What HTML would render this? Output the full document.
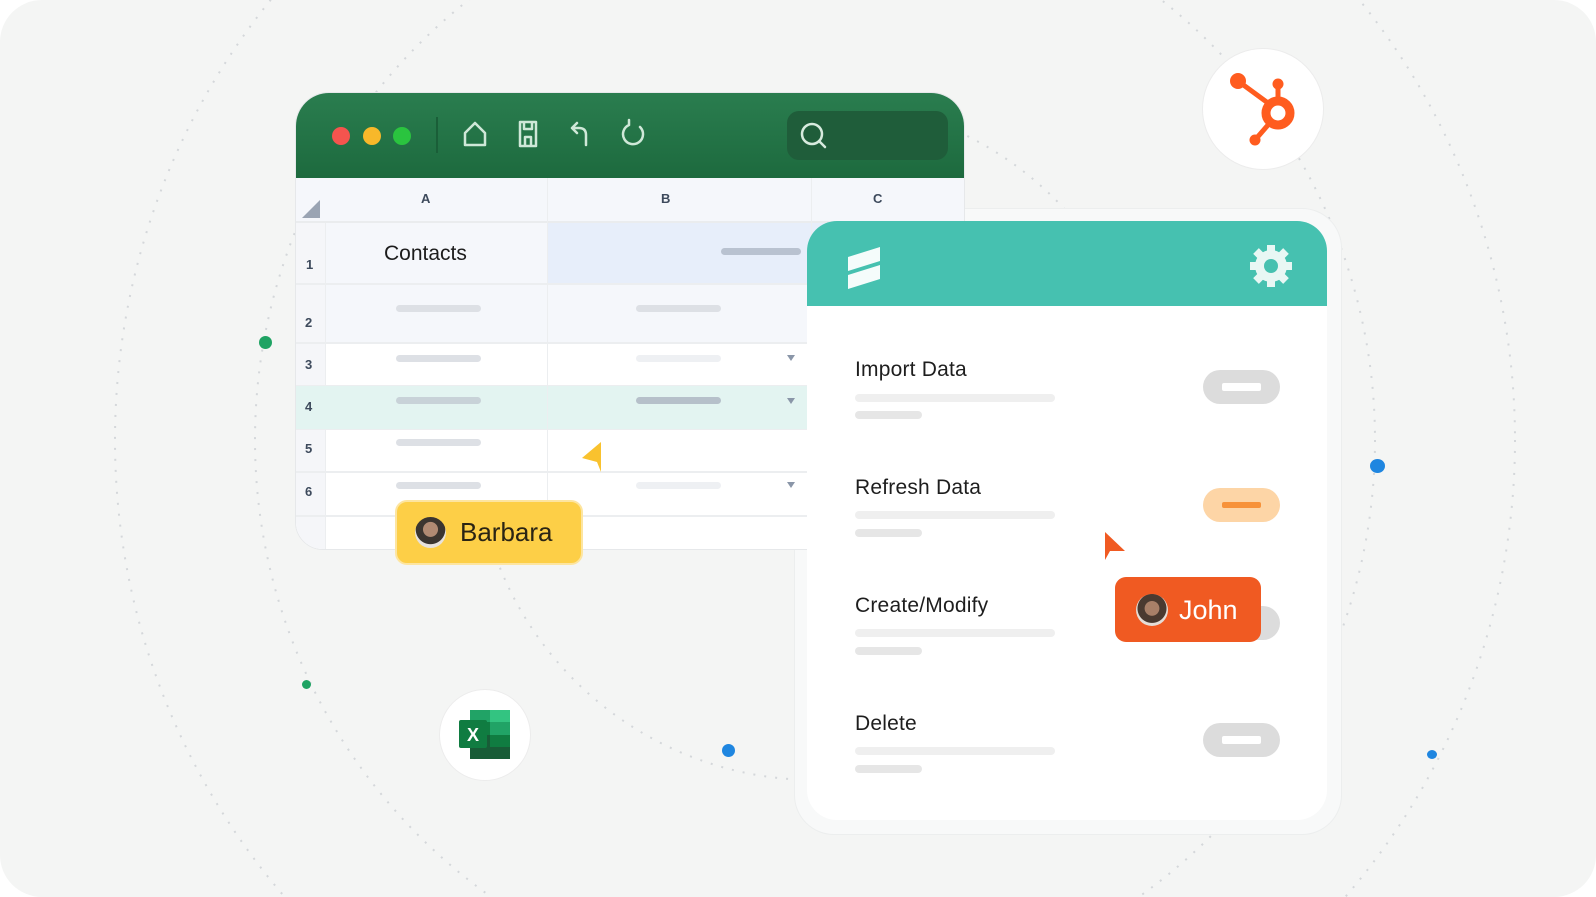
<!DOCTYPE html>
<html style="overflow:hidden;width:1596px;height:897px"><head><meta charset="utf-8"><style>
*{margin:0;padding:0;box-sizing:border-box}
body{width:1596px;height:897px;background:#fff;position:relative;overflow:hidden;font-family:"Liberation Sans",sans-serif}
.card{position:absolute;left:0;top:0;width:1596px;height:897px;background:#f4f5f4;border-radius:42px}
.abs{position:absolute}
.win{left:295px;top:92px;width:670px;height:458px;background:#fff;border-radius:34px 34px 0 28px;overflow:hidden;border:1px solid #e6e8ea}
.tb{left:0;top:0;width:670px;height:85px;background:linear-gradient(#2a7d4f,#1d6a3e)}
.bar{height:7px;border-radius:4px;background:#dde0e5}
.rn{font-size:13px;color:#3d4a5c;font-weight:bold}
.panel{left:807px;top:221px;width:520px;height:599px;background:#fff;border-radius:30px;overflow:hidden}
.ph{left:0;top:0;width:520px;height:85px;background:#46c1b0}
.lbl{font-size:21px;color:#1e1e1e;letter-spacing:0.2px}
.tg{width:77px;height:34px;border-radius:17px;background:#dcdcdc}
.tg i{position:absolute;left:19px;top:13px;width:39px;height:8px;background:#fff;border-radius:2px}
.lb{height:8px;background:#efefef;border-radius:4px}
.dot{position:absolute;border-radius:50%}
</style></head><body>
<div class="card"></div>
<svg class="abs" style="left:0;top:0" width="1596" height="897">
<g fill="none" stroke="#d4d7da" stroke-width="2" stroke-dasharray="2 9">
<circle cx="815" cy="440" r="340"/>
<circle cx="815" cy="440" r="560"/>
<circle cx="815" cy="440" r="700"/>
</g></svg>
<div class="abs" style="left:794px;top:208px;width:548px;height:627px;border-radius:40px;background:#f8f9f9;border:1px solid #eceeee"></div>

<div class="abs win">
 <div class="abs tb">
  <div class="dot" style="left:36px;top:34px;width:18px;height:18px;background:#f5544e"></div>
  <div class="dot" style="left:67px;top:34px;width:18px;height:18px;background:#f8b82a"></div>
  <div class="dot" style="left:97px;top:34px;width:18px;height:18px;background:#2ac43f"></div>
  <div class="abs" style="left:140px;top:24px;width:2px;height:36px;background:#1a5e38"></div>
  <svg class="abs" style="left:0;top:0" width="670" height="85" fill="none" stroke="#cfe8d8" stroke-width="2.5" stroke-linejoin="round" stroke-linecap="round">
   <path d="M169 52 V40 L179 30 L189 40 V52 Z"/>
   <path d="M224 29 H240 V53 H224 Z M228 29 V36 H236 V29 M229 44 H235 V53 H229 Z"/>
   <path d="M276 35 H283 Q290 35 290 42 V52 M276 35 L281 30 M276 35 L281 40"/>
   <path d="M333 32 A10 10 0 1 0 344 34 M333 32 V27"/>
  </svg>
  <div class="abs" style="left:491px;top:18px;width:161px;height:49px;border-radius:12px;background:#1f5d3a"></div>
  <svg class="abs" style="left:491px;top:18px" width="60" height="49" fill="none" stroke="#d7ebde" stroke-width="2.5" stroke-linecap="round"><circle cx="25" cy="23" r="10"/><path d="M32 30 L38 36"/></svg>
 </div>
 <div class="abs" style="left:0;top:85px;width:670px;height:373px;background:#fff"></div>
 <div class="abs" style="left:0;top:85px;width:30px;height:373px;background:#f5f6f9;border-right:1px solid #eceef0"></div>
 <div class="abs" style="left:0;top:85px;width:670px;height:45px;background:#f5f7fb;border-bottom:2px solid #eaecee"></div>
 <svg class="abs" style="left:4px;top:105px" width="22" height="22"><path d="M20 2 V20 H2 Z" fill="#9aa4b3"/></svg>
 <div class="abs rn" style="left:125px;top:98px">A</div>
 <div class="abs rn" style="left:365px;top:98px">B</div>
 <div class="abs rn" style="left:577px;top:98px">C</div>
 <div class="abs" style="left:30px;top:130px;width:640px;height:119px;background:#f5f7fb"></div>
 <div class="abs" style="left:251px;top:130px;width:420px;height:60px;background:#e7eefa"></div>
 <div class="abs" style="left:30px;top:292px;width:640px;height:44px;background:#e3f4f1"></div>
 <div class="abs" style="left:0;top:292px;width:30px;height:44px;background:#e3f4f1"></div>
 <div class="abs" style="left:251px;top:85px;width:1px;height:373px;background:#eceef0"></div>
 <div class="abs" style="left:515px;top:85px;width:1px;height:130px;background:#eceef0"></div>
 <div class="abs" style="left:0;top:190px;width:670px;height:2px;background:#eceef0"></div>
 <div class="abs" style="left:0;top:249px;width:670px;height:2px;background:#eceef0"></div>
 <div class="abs" style="left:0;top:292px;width:670px;height:1px;background:#eceef0"></div>
 <div class="abs" style="left:0;top:336px;width:670px;height:1px;background:#eceef0"></div>
 <div class="abs" style="left:0;top:378px;width:670px;height:2px;background:#eceef0"></div>
 <div class="abs" style="left:0;top:422px;width:670px;height:2px;background:#eceef0"></div>
 <div class="abs" style="left:88px;top:149px;font-size:21px;color:#1c1c1c">Contacts</div>
 <div class="abs bar" style="left:425px;top:155px;width:80px;background:#b9c2d0"></div>
 <div class="abs rn" style="left:10px;top:164px">1</div>
 <div class="abs rn" style="left:9px;top:222px">2</div>
 <div class="abs rn" style="left:9px;top:264px">3</div>
 <div class="abs rn" style="left:9px;top:306px">4</div>
 <div class="abs rn" style="left:9px;top:348px">5</div>
 <div class="abs rn" style="left:9px;top:391px">6</div>
 <div class="abs bar" style="left:100px;top:212px;width:85px"></div>
 <div class="abs bar" style="left:340px;top:212px;width:85px"></div>
 <div class="abs bar" style="left:100px;top:262px;width:85px"></div>
 <div class="abs bar" style="left:340px;top:262px;width:85px;background:#eef0f3"></div>
 <div class="abs bar" style="left:100px;top:304px;width:85px;background:#c8d2d8"></div>
 <div class="abs bar" style="left:340px;top:304px;width:85px;background:#b6c0ca"></div>
 <div class="abs bar" style="left:100px;top:346px;width:85px"></div>
 <div class="abs bar" style="left:100px;top:389px;width:85px"></div>
 <div class="abs bar" style="left:340px;top:389px;width:85px;background:#eef0f3"></div>
 <svg class="abs" style="left:490px;top:262px" width="12" height="140" fill="#8a96a8"><path d="M1 0 H9 L5 6Z M1 43 H9 L5 49Z M1 127 H9 L5 133Z"/></svg>
</div>
<svg class="abs" style="left:580px;top:440px" width="24" height="34"><path d="M21 2 V32 L17 22 L2 18 Z" fill="#f9c22e"/></svg>
<div class="abs" style="left:395px;top:500px;width:188px;height:65px;border-radius:12px;background:#fdcf47;border:2px solid #fde5a0"></div>
<div class="dot" style="left:415px;top:517px;width:31px;height:31px;background:radial-gradient(circle at 50% 40%,#b08a73 0 30%,#3b3530 32% 60%,#e8e2dc 62%)"></div>
<div class="abs" style="left:460px;top:517px;font-size:26px;color:#2a2414">Barbara</div>

<div class="abs panel">
 <div class="abs ph"></div>
 <svg class="abs" style="left:38px;top:22px" width="40" height="46"><path d="M3 14 L35 4 V18 L3 28 Z M3 32 L35 22 V36 L3 46 Z" fill="#fff" opacity="0.95"/></svg>
 <svg class="abs" style="left:440px;top:21px" width="48" height="48"><g fill="#e8f7f4"><circle cx="24" cy="24" r="16"/><g stroke="#e8f7f4" stroke-width="8"><path d="M24 3 V45 M3 24 H45 M9 9 L39 39 M39 9 L9 39"/></g></g><circle cx="24" cy="24" r="7" fill="#46c1b0"/></svg>
 <div class="abs lbl" style="left:48px;top:137px">Import Data</div>
 <div class="abs lb" style="left:48px;top:173px;width:200px"></div>
 <div class="abs lb" style="left:48px;top:190px;width:67px;background:#e6e6e6"></div>
 <div class="abs lbl" style="left:48px;top:255px">Refresh Data</div>
 <div class="abs lb" style="left:48px;top:290px;width:200px"></div>
 <div class="abs lb" style="left:48px;top:308px;width:67px;background:#e6e6e6"></div>
 <div class="abs lbl" style="left:48px;top:373px">Create/Modify</div>
 <div class="abs lb" style="left:48px;top:408px;width:200px"></div>
 <div class="abs lb" style="left:48px;top:426px;width:67px;background:#e6e6e6"></div>
 <div class="abs lbl" style="left:48px;top:491px">Delete</div>
 <div class="abs lb" style="left:48px;top:526px;width:200px"></div>
 <div class="abs lb" style="left:48px;top:544px;width:67px;background:#e6e6e6"></div>
 <div class="abs tg" style="left:396px;top:149px"><i></i></div>
 <div class="abs tg" style="left:396px;top:267px;background:#fdd5a6"><i style="background:#f7923a;height:6px;top:14px"></i></div>
 <div class="abs tg" style="left:396px;top:385px"><i></i></div>
 <div class="abs tg" style="left:396px;top:502px"><i></i></div>
</div>
<svg class="abs" style="left:1103px;top:530px" width="24" height="32"><path d="M2 2 V30 L7 21 L22 21 Z" fill="#f05a22"/></svg>
<div class="abs" style="left:1115px;top:577px;width:146px;height:65px;border-radius:11px;background:#f05a22"></div>
<div class="dot" style="left:1136px;top:594px;width:32px;height:32px;background:radial-gradient(circle at 50% 45%,#a88068 0 30%,#4a3a30 32% 60%,#e5ddd6 62%)"></div>
<div class="abs" style="left:1179px;top:595px;font-size:27px;color:#fff">John</div>

<div class="dot" style="left:1202px;top:48px;width:122px;height:122px;background:#fff;border:1px solid #ececec"></div>
<svg class="abs" style="left:1202px;top:48px" width="122" height="122"><g fill="#ff5c1f" stroke="#ff5c1f"><circle cx="36" cy="33" r="8" stroke="none"/><circle cx="76" cy="36" r="5.5" stroke="none"/><circle cx="53" cy="92" r="5.5" stroke="none"/><path d="M36 33 L66 55 M76 36 V52 M53 92 L66 77" stroke-width="5" fill="none"/><circle cx="76" cy="65" r="12" fill="none" stroke-width="9"/></g></svg>

<div class="dot" style="left:439px;top:689px;width:92px;height:92px;background:#fff;border:1px solid #ececec"></div>
<svg class="abs" style="left:439px;top:689px" width="92" height="92">
<rect x="31" y="21" width="40" height="12" fill="#21a366"/><rect x="51" y="21" width="20" height="12" fill="#33c481"/>
<rect x="31" y="33" width="40" height="13" fill="#107c41"/><rect x="51" y="33" width="20" height="13" fill="#21a366"/>
<rect x="31" y="46" width="40" height="12" fill="#185c37"/><rect x="51" y="46" width="20" height="12" fill="#107c41"/>
<rect x="31" y="58" width="40" height="12" fill="#185c37"/>
<rect x="20" y="31" width="28" height="28" rx="2" fill="#107c41"/>
<text x="34" y="52" text-anchor="middle" font-family="Liberation Sans" font-weight="bold" font-size="18" fill="#fff">X</text>
</svg>

<div class="dot" style="left:259px;top:336px;width:13px;height:13px;background:#1fa363"></div>
<div class="dot" style="left:302px;top:680px;width:9px;height:9px;background:#1fa363"></div>
<div class="dot" style="left:722px;top:744px;width:13px;height:13px;background:#1f86e0"></div>
<div class="dot" style="left:1370px;top:459px;width:15px;height:14px;background:#1f86e0"></div>
<div class="dot" style="left:1427px;top:750px;width:10px;height:9px;background:#1f86e0"></div>
</body></html>
